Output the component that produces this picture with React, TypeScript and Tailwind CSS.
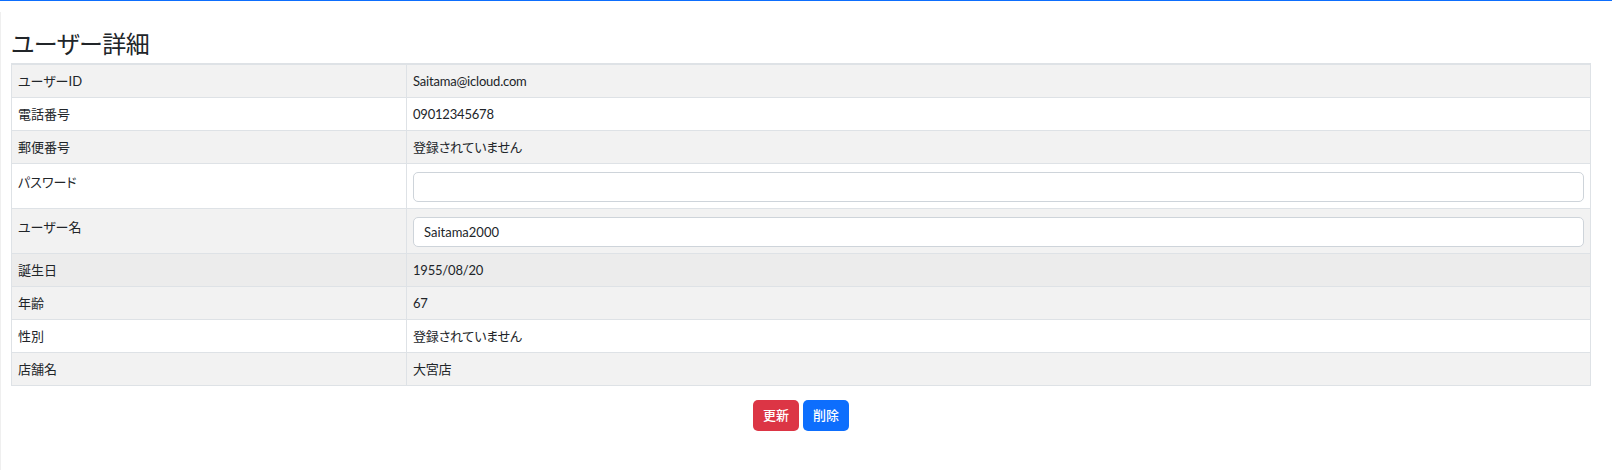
import React from "react";

type Row = {
  label: string;
  value?: string;
  input?: string;
  bg: string;
};

const rows: Row[] = [
  { label: "ユーザーID", value: "Saitama@icloud.com", bg: "bg-[#f2f2f2]" },
  { label: "電話番号", value: "09012345678", bg: "bg-white" },
  { label: "郵便番号", value: "登録されていません", bg: "bg-[#f2f2f2]" },
  { label: "パスワード", input: "", bg: "bg-white" },
  { label: "ユーザー名", input: "Saitama2000", bg: "bg-[#f2f2f2]" },
  { label: "誕生日", value: "1955/08/20", bg: "bg-[#ececec]" },
  { label: "年齢", value: "67", bg: "bg-[#f2f2f2]" },
  { label: "性別", value: "登録されていません", bg: "bg-white" },
  { label: "店舗名", value: "大宮店", bg: "bg-[#f2f2f2]" },
];

export default function App() {
  return (
    <div className="min-h-[470px] bg-white text-[#212529] font-['Lato','Noto_Sans_CJK_JP',sans-serif] [font-feature-settings:'palt']">
      <div className="h-px bg-[#0d6efd]" />
      <div className="mt-[11px] min-h-[458px] border-l border-[#efefef] pl-[10px] pr-[21px]">
        <h4 className="pt-[16px] pb-[6px] text-[24px] leading-[29px] font-normal font-['Noto_Sans_CJK_JP',sans-serif] tracking-[-0.5px]">
          ユーザー詳細
        </h4>

        <div className="border border-t-2 border-[#dee2e6] text-[13px]">
          {rows.map((r) => (
            <div
              key={r.label}
              className={`grid grid-cols-[395px_1fr] border-b border-[#dee2e6] last:border-b-0 ${r.bg}`}
            >
              <div
                className={`border-r border-[#dee2e6] px-[6px] leading-[20px] ${
                  r.input !== undefined ? "pt-[8px] pb-[6px]" : "py-[6px]"
                }`}
              >
                {r.label}
              </div>
              {r.input !== undefined ? (
                <div className="px-[6px] pt-[8px] pb-[6px]">
                  <input
                    type="text"
                    defaultValue={r.input}
                    className="block h-[30px] w-full rounded-[5px] border border-[#ced4da] bg-white px-[10px] text-[13px] text-[#212529] outline-none"
                  />
                </div>
              ) : (
                <div className="px-[6px] py-[6px] leading-[20px] tracking-[-0.2px]">{r.value}</div>
              )}
            </div>
          ))}
        </div>

        <div className="mt-[14px] flex justify-center gap-[4px]">
          <button className="h-[31px] rounded-[5px] bg-[#dc3545] px-[10px] text-[13px] font-medium text-white">
            更新
          </button>
          <button className="h-[31px] rounded-[5px] bg-[#0d6efd] px-[10px] text-[13px] font-medium text-white">
            削除
          </button>
        </div>
      </div>
    </div>
  );
}
